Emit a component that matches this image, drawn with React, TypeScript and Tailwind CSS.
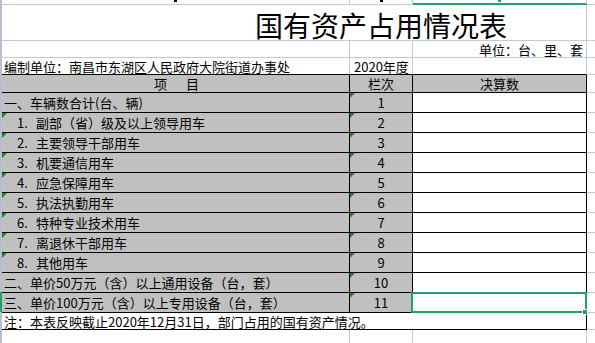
type Row = {
  num?: string
  label: string
  no: string
  flagItem?: boolean
  selected?: boolean
}

const rows: Row[] = [
  { label: '一、车辆数合计(台、辆)', no: '1' },
  { num: '1.', label: '副部（省）级及以上领导用车', no: '2', flagItem: true },
  { num: '2.', label: '主要领导干部用车', no: '3', flagItem: true },
  { num: '3.', label: '机要通信用车', no: '4', flagItem: true },
  { num: '4.', label: '应急保障用车', no: '5', flagItem: true },
  { num: '5.', label: '执法执勤用车', no: '6', flagItem: true },
  { num: '6.', label: '特种专业技术用车', no: '7', flagItem: true },
  { num: '7.', label: '离退休干部用车', no: '8', flagItem: true },
  { num: '8.', label: '其他用车', no: '9', flagItem: true },
  { label: '二、单价50万元（含）以上通用设备（台，套）', no: '10' },
  { label: '三、单价100万元（含）以上专用设备（台，套）', no: '11', selected: true },
]

function Flag() {
  return (
    <span className="absolute top-0 left-0 w-0 h-0 border-t-[5px] border-t-[#138a13] border-r-[5px] border-r-transparent" />
  )
}

function Rest({ h }: { h: string }) {
  return <div className={`w-[8px] ${h} border-b border-[#c3c9d6]`} />
}

export default function App() {
  return (
    <div className="w-[595px] h-[343px] overflow-hidden bg-white flex text-[13px] leading-none text-black font-['Noto_Sans_CJK_SC',sans-serif]">
      {/* row header gutter */}
      <div className="w-[2px] flex flex-col">
        <div className="h-[292px] bg-[#b6bed0]" />
        <div className="h-[20px] bg-[#21a366]" />
        <div className="flex-1 bg-[#b6bed0]" />
      </div>

      <div className="flex-1 flex flex-col">
        {/* clipped column header row */}
        <div className="flex h-[5px]">
          <div className="w-[348px] border-r border-b border-[#c3c9d6] flex justify-center">
            <span className="w-[3px] h-[2px] bg-black" />
          </div>
          <div className="w-[63px] border-r border-b border-[#c3c9d6] flex justify-center">
            <span className="w-[3px] h-[2px] bg-black" />
          </div>
          <div className="w-[174px] border-r border-r-[#c3c9d6] border-b-2 border-b-[#21a366] flex justify-center">
            <span className="w-[3px] h-[2px] bg-[#21a366]" />
          </div>
          <Rest h="h-[5px]" />
        </div>

        {/* title */}
        <div className="flex h-[36px]">
          <div className="w-[585px] border-r border-b border-[#c3c9d6] flex items-center pt-1 pl-[253px] text-[28px]">
            国有资产占用情况表
          </div>
          <Rest h="h-[36px]" />
        </div>

        {/* unit */}
        <div className="flex h-[17px]">
          <div className="w-[348px] border-r border-b border-[#c3c9d6]" />
          <div className="w-[63px] border-r border-b border-[#c3c9d6]" />
          <div className="w-[174px] border-r border-b border-[#c3c9d6] flex items-center justify-end pr-[3px]">
            单位：台、里、套
          </div>
          <Rest h="h-[17px]" />
        </div>

        {/* compiler */}
        <div className="flex h-[17px]">
          <div className="w-[348px] border-r border-r-[#c3c9d6] border-b border-b-black flex items-center pl-[2px] whitespace-nowrap">
            编制单位：南昌市东湖区人民政府大院街道办事处
          </div>
          <div className="w-[63px] border-r border-r-[#c3c9d6] border-b border-b-black flex items-center pl-[4px] whitespace-nowrap">
            2020年度
          </div>
          <div className="w-[174px] border-r border-r-[#c3c9d6] border-b border-b-black" />
          <Rest h="h-[17px]" />
        </div>

        {/* table header */}
        <div className="flex h-[18px]">
          <div className="w-[348px] bg-[#c0c0c0] border-r border-b border-black flex items-center justify-center gap-[19px] pl-[2px]">
            <span>项</span>
            <span>目</span>
          </div>
          <div className="w-[63px] bg-[#c0c0c0] border-r border-b border-black flex items-center justify-center">
            栏次
          </div>
          <div className="w-[174px] bg-[#c0c0c0] border-r border-b border-black flex items-center justify-center">
            决算数
          </div>
          <Rest h="h-[18px]" />
        </div>

        {rows.map((r) => (
          <div key={r.no} className="flex h-[20px]">
            <div
              className={`relative w-[348px] bg-[#c0c0c0] border-r border-b border-black flex items-center whitespace-nowrap ${
                r.num ? 'pl-[15px]' : 'pl-[2px]'
              }`}
            >
              {r.flagItem && <Flag />}
              {r.num && <span className="inline-block w-[19px]">{r.num}</span>}
              <span>{r.label}</span>
            </div>
            <div className="relative w-[63px] bg-[#c0c0c0] border-r border-b border-black flex items-center justify-center">
              <Flag />
              {r.no}
            </div>
            <div className="relative w-[174px] bg-white border-r border-b border-black">
              {r.selected && (
                <>
                  <span className="absolute z-10 -top-px -left-[2px] -right-px -bottom-px border-2 border-[#21a366]" />
                  <span className="absolute z-10 -right-[2px] -bottom-[3px] w-[6px] h-[6px] bg-[#21a366] border border-white" />
                </>
              )}
            </div>
            <Rest h="h-[20px]" />
          </div>
        ))}

        {/* note */}
        <div className="flex h-[17px]">
          <div className="w-[585px] border-r border-b border-black flex items-center pl-[2px] whitespace-nowrap">
            注：本表反映截止2020年12月31日，部门占用的国有资产情况。
          </div>
          <Rest h="h-[17px]" />
        </div>

        {/* empty grid below */}
        <div className="flex flex-1">
          <div className="w-[348px] border-r border-[#c3c9d6]" />
          <div className="w-[63px] border-r border-[#c3c9d6]" />
          <div className="w-[174px] border-r border-[#c3c9d6]" />
          <div className="w-[8px]" />
        </div>
      </div>
    </div>
  )
}
